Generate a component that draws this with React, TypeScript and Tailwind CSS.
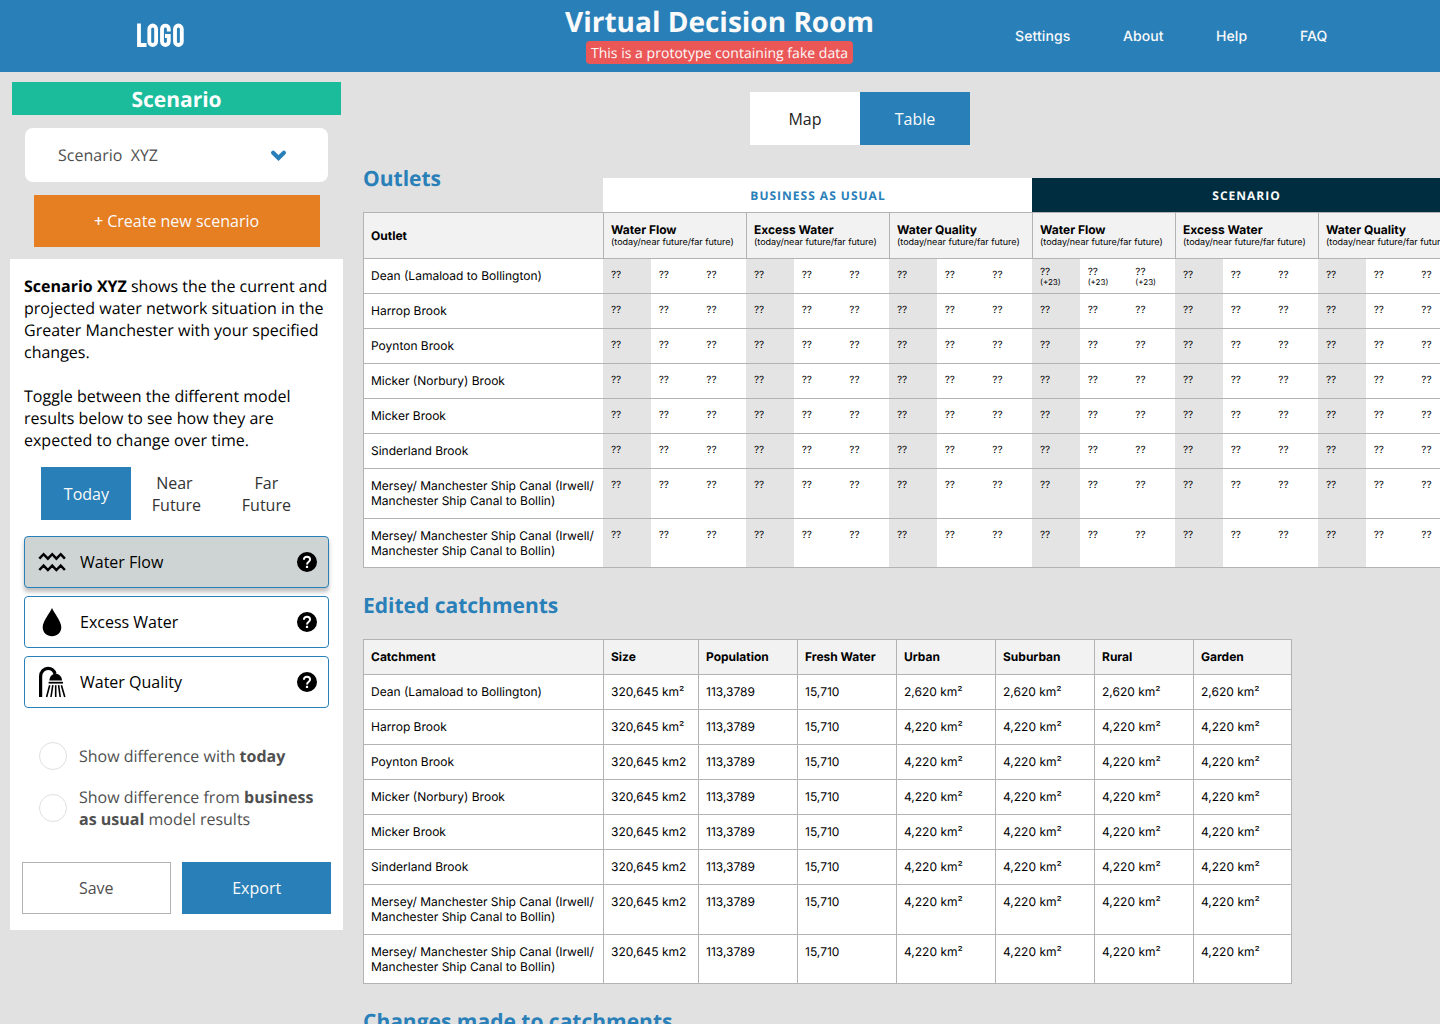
import React from "react";

const NAMES = [
  "Dean (Lamaload to Bollington)",
  "Harrop Brook",
  "Poynton Brook",
  "Micker (Norbury) Brook",
  "Micker Brook",
  "Sinderland Brook",
  "Mersey/ Manchester Ship Canal (Irwell/ Manchester Ship Canal to Bollin)",
  "Mersey/ Manchester Ship Canal (Irwell/ Manchester Ship Canal to Bollin)",
];

const rowHeight = (i: number) => (i < 6 ? "h-[35px]" : i === 6 ? "h-[50px]" : "h-[49px]");

function Wave() {
  return (
    <svg width="28" height="28" viewBox="0 0 28 28" fill="none" stroke="#000" strokeWidth="2.5">
      <path d="M1.3 10.6 L5.6 6.2 L9.9 10.6 L14.2 6.2 L18.4 10.6 L22.7 6.2 L26.9 10.6" />
      <path d="M1.3 22 L5.6 17.6 L9.9 22 L14.2 17.6 L18.4 22 L22.7 17.6 L26.9 22" />
    </svg>
  );
}

function Drop() {
  return (
    <svg width="28" height="30" viewBox="0 0 28 30">
      <path d="M14 1 C15.6 5.2 23.3 14.2 23.3 20.2 C23.3 25.4 19.2 29.2 14 29.2 C8.800 29.2 4.700 25.400 4.700 20.200 C4.700 14.200 12.400 5.200 14 1Z" />
    </svg>
  );
}

function Shower() {
  return (
    <svg width="28" height="32" viewBox="0 0 28 32" fill="none" stroke="#000">
      <path d="M2.6 31 V10.500 C2.600 5.500 6 2.400 10 2.400 C13.800 2.400 16.200 5 17.100 8" strokeWidth="3.2" />
      <path d="M11.400 14.600 C11.400 10.600 14 7.700 17.600 7.700 C21.200 7.700 24 10.600 24 14.600Z" fill="#000" stroke="none" />
      <path d="M10.600 16.700 H25" strokeWidth="1.8" />
      <path d="M11.700 19.200 L8.600 31 M14.800 19.200 L13 31 M17.700 19.200 V31 M20.600 19.200 L22.200 31 M23.400 19.200 L26.800 31" strokeWidth="1.6" />
    </svg>
  );
}

function HelpIcon() {
  return (
    <svg width="20" height="20" viewBox="0 0 20 20" fill="none">
      <circle cx="10" cy="10" r="10" fill="#000" />
      <path d="M6.900 7.800 C6.900 5.900 8.200 4.700 10 4.700 C11.900 4.700 13.100 5.900 13.100 7.500 C13.100 9.800 10 9.700 10 12.500" stroke="#fff" strokeWidth="2" />
      <rect x="8.900" y="13.800" width="2.200" height="2.200" fill="#fff" />
    </svg>
  );
}

function ModelButton({ icon, label, active }: { icon: React.ReactNode; label: string; active?: boolean }) {
  return (
    <button
      className={
        "flex h-[52px] w-[305px] items-center rounded-[4px] border border-[#2980b9] pl-[13px] pr-[11px] text-left " +
        (active ? "bg-[#ced4d4] shadow-[0_4px_4px_rgba(0,0,0,0.25)]" : "bg-white")
      }
    >
      <span className="flex w-7 justify-center">{icon}</span>
      <span className="ml-[14px] flex-1">{label}</span>
      <HelpIcon />
    </button>
  );
}

function GroupHead({ title }: { title: string }) {
  return (
    <div className="w-[143px] shrink-0 border-l border-t border-[#b3b3b3] bg-[#f2f2f2] pl-[7px] pt-[9px]">
      <div className="text-[12px] font-bold leading-[15px]">{title}</div>
      <div className="whitespace-nowrap text-[9px] leading-[11px]">(today/near future/far future)</div>
    </div>
  );
}

function OutletsTable() {
  return (
    <div className="w-[1098px]">
      <div className="flex h-[46px]">
        <div className="w-[240px] shrink-0 border-l border-t border-[#b3b3b3] bg-[#f2f2f2] pl-[7px] pt-[15px] text-[12px] font-bold leading-[15px]">Outlet</div>
        {["Water Flow", "Excess Water", "Water Quality", "Water Flow", "Excess Water", "Water Quality"].map((t, i) => (
          <GroupHead key={i} title={t} />
        ))}
      </div>
      {NAMES.map((n, r) => (
        <div key={r} className={"flex border-t border-[#b3b3b3] bg-white " + rowHeight(r)}>
          <div className="w-[240px] shrink-0 border-l border-[#b3b3b3] pl-[7px] pt-[9px] text-[12px] leading-[15px]">{n}</div>
          {[0, 1, 2, 3, 4, 5].map((g) => (
            <div key={g} className="flex w-[143px] shrink-0">
              {[0, 1, 2].map((c) => {
                const diff = r === 0 && g === 3;
                return (
                  <div
                    key={c}
                    className={"flex-1 pl-2 text-[10px] leading-[12px] " + (diff ? "pt-[7px] " : "pt-[10px] ") + (c === 0 ? "bg-[#e4e4e4]" : "")}
                  >
                    ??
                    {diff && <div className="text-[8px] leading-[9px]">(+23)</div>}
                  </div>
                );
              })}
            </div>
          ))}
        </div>
      ))}
      <div className="h-px bg-[#b3b3b3]" />
    </div>
  );
}

const COLS = "grid grid-cols-[240px_95px_99px_99px_99px_99px_99px_98px]";

function CatchmentsTable() {
  return (
    <div className="w-[929px] border-b border-r border-[#b3b3b3] bg-white text-[12px] leading-[15px]">
      <div className={COLS + " h-[35px] bg-[#f2f2f2] font-bold"}>
        {["Catchment", "Size", "Population", "Fresh Water", "Urban", "Suburban", "Rural", "Garden"].map((t) => (
          <div key={t} className="border-l border-t border-[#b3b3b3] pl-[7px] pt-[9px]">{t}</div>
        ))}
      </div>
      {NAMES.map((n, r) => {
        const area = r === 0 ? "2,620 km²" : "4,220 km²";
        return (
          <div key={r} className={COLS + " " + rowHeight(r)}>
            {[n, r < 2 ? "320,645 km²" : "320,645 km2", "113,3789", "15,710", area, area, area, area].map((t, c) => (
              <div key={c} className="border-l border-t border-[#b3b3b3] pl-[7px] pt-[9px]">{t}</div>
            ))}
          </div>
        );
      })}
    </div>
  );
}

const H2 = "font-['Open_Sans',sans-serif] text-[21px] font-bold leading-[30px] text-[#2980b9]";

export default function App() {
  return (
    <div className="h-[1024px] w-[1440px] overflow-hidden bg-[#e1e1e1] font-['Open_Sans',sans-serif] text-[16px] leading-[22px] text-black [text-rendering:geometricPrecision]">
      <header className="flex h-[72px] bg-[#2980b9] text-white">
        <div className="flex w-[320px] items-center justify-center">
          <svg width="48" height="26" viewBox="0 0 48 26" fill="none" stroke="#fff" strokeWidth="3.8" aria-label="LOGO">
            <path d="M3 0.500 V22 H10.500" />
            <rect x="13.300" y="2.500" width="6.800" height="19.500" rx="3.400" />
            <path d="M32.800 8.500 V5.900 C32.800 1.400 26 1.400 26 5.900 V18.600 C26 23.100 32.800 23.100 32.800 18.600 V13 H29" />
            <rect x="39" y="2.500" width="6.800" height="19.500" rx="3.400" />
          </svg>
        </div>
        <div className="flex w-[799px] flex-col items-center pt-[3px]">
          <h1 className="text-[28px] font-bold leading-[38px] text-[#fafafa]">Virtual Decision Room</h1>
          <div className="h-[23px] rounded-[4px] bg-[#eb5757] px-[5px] text-[14px] leading-[25px] tracking-[0.03px] text-[#fafafa]">This is a prototype containing fake data</div>
        </div>
        <nav className="flex h-[72px] items-center pt-px font-['Inter',sans-serif] text-[14px] font-medium tracking-[0.1px] text-[#fafafa]">
          <a className="-ml-[104px] w-[108px]">Settings</a>
          <a className="w-[93px]">About</a>
          <a className="w-[84px]">Help</a>
          <a>FAQ</a>
        </nav>
      </header>

      <div className="flex">
        <aside className="ml-[10px] w-[333px] shrink-0 pt-[10px]">
          <div className="mx-[2px] h-[33px] bg-[#1abc9c] text-center text-[21px] font-bold leading-[36px] text-white">Scenario</div>
          <div className="ml-[15px] mt-[13px] flex h-[54px] w-[303px] items-center justify-between rounded-[8px] bg-white pl-[33px] pr-[41px] text-[#4f4f4f]">
            <span className="whitespace-pre">Scenario  XYZ</span>
            <svg width="17" height="12" viewBox="0 0 17 12" fill="none" stroke="#2980b9" strokeWidth="4.2" strokeLinecap="round">
              <path d="M3.100 3.700 L8.500 9 L13.900 3.700" />
            </svg>
          </div>
          <button className="ml-[23.5px] mt-[13px] block h-[52px] w-[286px] bg-[#e67e22] text-[#fafafa]"><span className="font-semibold">+</span> Create new scenario</button>

          <section className="mt-3 h-[671px] bg-white pl-[14px] pt-4">
            <p className="w-[308px]">
              <b>Scenario XYZ</b> shows the the current and projected water network situation in the Greater Manchester with your specified changes.
            </p>
            <p className="mt-[22px] w-[290px]">Toggle between the different model results below to see how they are expected to change over time.</p>
            <div className="ml-[17.4px] mt-[16px] flex h-[53px] text-[#333]">
              <button className="w-[90px] bg-[#2980b9] text-[#fafafa]">Today</button>
              <button className="w-[90px]"><span className="mr-1">Near</span><br />Future</button>
              <button className="w-[90px]">Far<br />Future</button>
            </div>
            <div className="mt-4 flex flex-col gap-2">
              <ModelButton icon={<Wave />} label="Water Flow" active />
              <ModelButton icon={<Drop />} label="Excess Water" />
              <ModelButton icon={<Shower />} label="Water Quality" />
            </div>
            <div className="ml-[15px] mt-[34px] flex items-center gap-3 text-[#4f4f4f]">
              <span className="h-7 w-7 rounded-full border border-[#e0e0e0]" />
              <span>Show difference with <b>today</b></span>
            </div>
            <div className="ml-[15px] mt-[16px] flex items-center gap-3 text-[#4f4f4f]">
              <span className="h-7 w-7 shrink-0 rounded-full border border-[#e0e0e0]" />
              <span className="w-[240px]">Show difference from <b>business as usual</b> model results</span>
            </div>
            <div className="-ml-[2px] mt-8 flex gap-[11.900px]">
              <button className="h-[52px] w-[148.500px] border border-[#b3b3b3] text-[#4f4f4f]">Save</button>
              <button className="h-[52px] w-[148.600px] bg-[#2980b9] text-[#fafafa]">Export</button>
            </div>
          </section>
        </aside>

        <main className="ml-5 w-[1077px] shrink-0 overflow-hidden pt-5 font-['Inter',sans-serif]">
          <div className="ml-[387px] flex h-[53px] w-[220px] font-['Open_Sans',sans-serif]">
            <button className="w-1/2 bg-white text-[#222]">Map</button>
            <button className="w-1/2 bg-[#2980b9] text-[#fafafa]">Table</button>
          </div>
          <div className="mt-[18px] flex h-[49px] w-[1098px]">
            <h2 className={H2 + " w-[240px] shrink-0 pt-px"}>Outlets</h2>
            <div className="mt-[15px] flex font-['Open_Sans',sans-serif] text-[12px] font-bold leading-[35px] tracking-[1px]">
              <div className="w-[429px] bg-white pl-px text-center text-[#2980b9]">BUSINESS AS USUAL</div>
              <div className="w-[429px] bg-[#002d40] text-center text-[#fafafa]">SCENARIO</div>
            </div>
          </div>
          <OutletsTable />
          <h2 className={H2 + " mb-[18px] mt-[23px]"}>Edited catchments</h2>
          <CatchmentsTable />
          <h2 className={H2 + " mt-[23px]"}>Changes made to catchments</h2>
        </main>
      </div>
    </div>
  );
}
